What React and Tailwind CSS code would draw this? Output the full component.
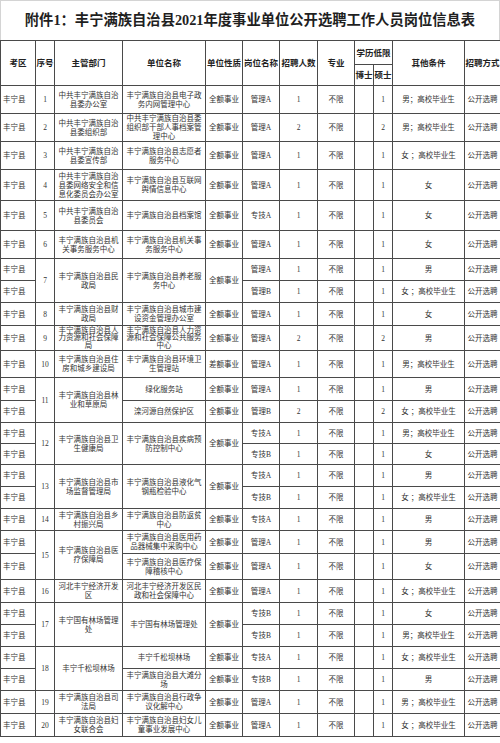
import React from 'react';

// 附件1 岗位信息表 — table recreated with rowspans

const FONT = { fontFamily: '"Liberation Serif", "Noto Sans CJK SC", serif' };

const cell = 'border border-[#4a4a4a] p-0 text-center align-middle leading-[9px] text-[7.5px] text-[#333] whitespace-pre-line';
const head = 'border border-[#4a4a4a] p-0 text-center align-middle leading-[10px] text-[8.5px] font-bold text-[#222]';

const c = (v, rs = 1) => ({ v, rs });

const rows = [
  { h: 28, seq: c('1'), dept: c('中共丰宁满族自治\n县委办公室'), unit: c('丰宁满族自治县电子政\n务内网管理中心'), nature: c('全额事业'), post: '管理A', num: '1', master: '1', other: '男；高校毕业生' },
  { h: 28, seq: c('2'), dept: c('中共丰宁满族自治\n县委组织部'), unit: c('中共丰宁满族自治县委\n组织部干部人事档案管\n理中心'), nature: c('全额事业'), post: '管理A', num: '2', master: '2', other: '男；高校毕业生' },
  { h: 28, seq: c('3'), dept: c('中共丰宁满族自治\n县委宣传部'), unit: c('丰宁满族自治县志愿者\n服务中心'), nature: c('全额事业'), post: '管理A', num: '1', master: '1', other: '女 ；高校毕业生' },
  { h: 31, seq: c('4'), dept: c('中共丰宁满族自治\n县委网络安全和信\n息化委员会办公室'), unit: c('丰宁满族自治县互联网\n舆情信息中心'), nature: c('全额事业'), post: '管理A', num: '1', master: '1', other: '女' },
  { h: 30, seq: c('5'), dept: c('中共丰宁满族自治\n县委员会'), unit: c('丰宁满族自治县档案馆'), nature: c('全额事业'), post: '专技A', num: '1', master: '1', other: '女' },
  { h: 28, seq: c('6'), dept: c('丰宁满族自治县机\n关事务服务中心'), unit: c('丰宁满族自治县机关事\n务服务中心'), nature: c('全额事业'), post: '管理A', num: '1', master: '1', other: '女' },
  { h: 22, seq: c('7', 2), dept: c('丰宁满族自治县民\n政局', 2), unit: c('丰宁满族自治县养老服\n务中心', 2), nature: c('全额事业', 2), post: '管理A', num: '1', master: '1', other: '男' },
  { h: 22, post: '管理B', num: '1', master: '1', other: '女 ；高校毕业生' },
  { h: 23, seq: c('8'), dept: c('丰宁满族自治县财\n政局'), unit: c('丰宁满族自治县城市建\n设资金管理办公室'), nature: c('全额事业'), post: '管理A', num: '1', master: '1', other: '女' },
  { h: 25, tight: true, seq: c('9'), dept: c('丰宁满族自治县人\n力资源和社会保障\n局'), unit: c('丰宁满族自治县人力资\n源和社会保障公共服务\n中心'), nature: c('全额事业'), post: '管理A', num: '2', master: '2', other: '男' },
  { h: 27, seq: c('10'), dept: c('丰宁满族自治县住\n房和城乡建设局'), unit: c('丰宁满族自治县环境卫\n生管理站'), nature: c('差额事业'), post: '管理A', num: '1', master: '1', other: '男；高校毕业生' },
  { h: 23, seq: c('11', 2), dept: c('丰宁满族自治县林\n业和草原局', 2), unit: c('绿化服务站'), nature: c('全额事业'), post: '管理A', num: '1', master: '1', other: '男' },
  { h: 22, unit: c('滦河源自然保护区'), nature: c('全额事业'), post: '管理B', num: '2', master: '2', other: '女 ；高校毕业生' },
  { h: 21, seq: c('12', 2), dept: c('丰宁满族自治县卫\n生健康局', 2), unit: c('丰宁满族自治县疾病预\n防控制中心', 2), nature: c('全额事业', 2), post: '专技A', num: '1', master: '1', other: '男；高校毕业生' },
  { h: 21, post: '专技B', num: '1', master: '1', other: '女' },
  { h: 22, seq: c('13', 2), dept: c('丰宁满族自治县市\n场监督管理局', 2), unit: c('丰宁满族自治县液化气\n钢瓶检验中心', 2), nature: c('全额事业', 2), post: '专技A', num: '1', master: '1', other: '男' },
  { h: 22, post: '专技B', num: '1', master: '1', other: '女 ；高校毕业生' },
  { h: 22, seq: c('14'), dept: c('丰宁满族自治县乡\n村振兴局'), unit: c('丰宁满族自治县防返贫\n中心'), nature: c('全额事业'), post: '专技A', num: '1', master: '1', other: '男' },
  { h: 23, seq: c('15', 2), dept: c('丰宁满族自治县医\n疗保障局', 2), unit: c('丰宁满族自治县医用药\n品器械集中采购中心'), nature: c('全额事业'), post: '管理A', num: '1', master: '1', other: '男' },
  { h: 26, unit: c('丰宁满族自治县医疗保\n障稽核中心'), nature: c('全额事业'), post: '管理A', num: '1', master: '1', other: '女' },
  { h: 23, seq: c('16'), dept: c('河北丰宁经济开发\n区'), unit: c('河北丰宁经济开发区民\n政和社会保障中心'), nature: c('全额事业'), post: '管理A', num: '1', master: '1', other: '女 ；高校毕业生' },
  { h: 22, seq: c('17', 2), dept: c('丰宁国有林场管理\n处', 2), unit: c('丰宁国有林场管理处', 2), nature: c('全额事业', 2), post: '专技B', num: '1', master: '1', other: '女' },
  { h: 22, post: '专技B', num: '1', master: '1', other: '男；高校毕业生' },
  { h: 22, seq: c('18', 2), dept: c('丰宁千松坝林场', 2), unit: c('丰宁千松坝林场'), nature: c('全额事业'), post: '专技A', num: '1', master: '1', other: '女 ；高校毕业生' },
  { h: 22, unit: c('丰宁满族自治县大滩分\n场'), nature: c('全额事业'), post: '专技B', num: '1', master: '1', other: '男' },
  { h: 23, seq: c('19'), dept: c('丰宁满族自治县司\n法局'), unit: c('丰宁满族自治县行政争\n议化解中心'), nature: c('全额事业'), post: '管理A', num: '1', master: '1', other: '男 ；高校毕业生' },
  { h: 23, seq: c('20'), dept: c('丰宁满族自治县妇\n女联合会'), unit: c('丰宁满族自治县妇女儿\n童事业发展中心'), nature: c('全额事业'), post: '管理A', num: '1', master: '1', other: '女 ；高校毕业生' },
];

function Opt({ d, tight }) {
  if (!d) return null;
  return (
    <td rowSpan={d.rs} className={tight ? `${cell} !leading-[7.6px]` : cell}>
      {d.v}
    </td>
  );
}

export default function App() {
  return (
    <div className="w-[500px] h-[743px] bg-white overflow-hidden" style={FONT}>
      {/* Title */}
      <div className="h-[40px] flex items-center justify-center border-t border-x border-[#d4d4d4]">
        <h1 className="text-[14.3px] font-bold text-[#1f1f1f] leading-none">
          附件1：丰宁满族自治县2021年度事业单位公开选聘工作人员岗位信息表
        </h1>
      </div>

      <table className="table-fixed border-collapse w-[500px]">
        <colgroup>
          <col className="w-[35px]" />
          <col className="w-[19px]" />
          <col className="w-[68px]" />
          <col className="w-[83px]" />
          <col className="w-[37px]" />
          <col className="w-[37px]" />
          <col className="w-[38px]" />
          <col className="w-[37px]" />
          <col className="w-[19px]" />
          <col className="w-[19px]" />
          <col className="w-[72px]" />
          <col className="w-[36px]" />
        </colgroup>
        <thead>
          <tr className="h-[24px]">
            <th rowSpan={2} className={head}>考区</th>
            <th rowSpan={2} className={head}>序号</th>
            <th rowSpan={2} className={head}>主管部门</th>
            <th rowSpan={2} className={head}>单位名称</th>
            <th rowSpan={2} className={head}>单位性质</th>
            <th rowSpan={2} className={head}>岗位名称</th>
            <th rowSpan={2} className={head}>招聘人数</th>
            <th rowSpan={2} className={head}>专业</th>
            <th colSpan={2} className={head}>学历低限</th>
            <th rowSpan={2} className={head}>其他条件</th>
            <th rowSpan={2} className={head}>招聘方式</th>
          </tr>
          <tr className="h-[21px]">
            <th className={head}>博士</th>
            <th className={head}>硕士</th>
          </tr>
        </thead>
        <tbody>
          {rows.map((r, i) => (
            <tr key={i} style={{ height: r.h }}>
              <td className={`${cell} text-left pl-[2px]`}>丰宁县</td>
              <Opt d={r.seq} />
              <Opt d={r.dept} tight={r.tight} />
              <Opt d={r.unit} tight={r.tight} />
              <Opt d={r.nature} />
              <td className={cell}>{r.post}</td>
              <td className={cell}>{r.num}</td>
              <td className={cell}>不限</td>
              <td className={cell}></td>
              <td className={cell}>{r.master}</td>
              <td className={cell}>{r.other}</td>
              <td className={cell}>公开选聘</td>
            </tr>
          ))}
        </tbody>
      </table>
    </div>
  );
}
